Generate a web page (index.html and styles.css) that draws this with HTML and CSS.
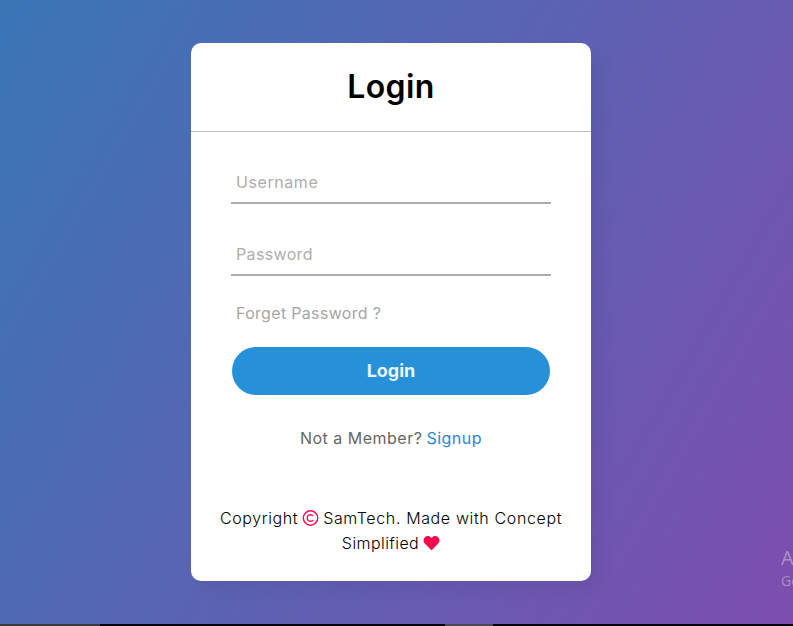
FILE: index.html
```html
<!DOCTYPE html>
<html lang="en">
<head>
<meta charset="utf-8">
<title>Login</title>
<link rel="stylesheet" href="styles.css">
</head>
<body>
<main class="page">
  <section class="card">
    <h1 class="title"><span>Login</span></h1>
    <form class="form">
      <div class="field"><label class="username">Username</label></div>
      <div class="field"><label class="password">Password</label></div>
      <div class="forget"><span>Forget Password ?</span></div>
      <button class="submit" type="button"><span>Login</span></button>
      <div class="signup"><span class="member">Not a Member?</span> <a>Signup</a></div>
    </form>
    <footer class="credits">
      <div class="line">
        <span class="copy">Copyright</span>
        <svg class="icon" viewBox="0 0 16 16" fill="none" stroke="currentColor"><circle cx="8" cy="8" r="7.2" stroke-width="1.4"/><path d="M10.600 5.900A3.300 3.300 0 1 0 10.600 10.100" stroke-width="1.400"/></svg>
        <span class="made">SamTech. Made with Concept</span>
      </div>
      <div class="line">
        <span class="simple">Simplified</span>
        <svg class="icon" viewBox="0 0 16 16" fill="currentColor"><path d="M14.4 2.1C12.7.6 10.2.9 8.600 2.500L8 3.100l-.6-.6C5.800.9 3.300.6 1.600 2.100-.4 3.800-.5 6.800 1.300 8.600l6 6.100q.7.700 1.400 0l6-6.100C16.500 6.800 16.400 3.800 14.400 2.100z"/></svg>
      </div>
    </footer>
  </section>
  <aside class="watermark"><div class="activate">A</div><div class="settings">Go</div></aside>
</main>
<div class="taskbar"><i class="search"></i><i class="active"></i></div>
</body>
</html>
```
FILE: styles.css
```css
* { box-sizing: border-box; }
body {
  margin: 0;
  height: 626px;
  overflow: hidden;
  font: 400 16px/24px Inter, "Open Sans", sans-serif;
}
.page {
  position: relative;
  height: 624px;
  padding: 43px 0 0 191px;
  overflow: hidden;
  background: linear-gradient(120deg, #2980b9, #8e44ad) -292px 0 / 1366px 624px no-repeat;
}
.card {
  width: 400px;
  height: 538px;
  background: #fff;
  border-radius: 10px;
  box-shadow: 10px 10px 15px rgba(0, 0, 0, .05);
}
.title {
  display: flex;
  justify-content: center;
  height: 89px;
  margin: 0;
  padding-top: 20px;
  border-bottom: 1px solid silver;
  font-size: 32px;
  font-weight: 600;
  line-height: 48px;
  letter-spacing: .4px;
}
.form { padding: 30px 40px 0; }
.field {
  height: 42px;
  margin-bottom: 30px;
  padding: 8px 5px 0;
  border-bottom: 2px solid #adadad;
  color: #adadad;
}
.username { letter-spacing: .58px; }
.password { letter-spacing: .35px; }
.forget {
  margin: -5px 0 22px 5px;
  color: #a6a6a6;
  letter-spacing: .32px;
}
.submit {
  display: block;
  width: 318px;
  height: 48px;
  margin: 0 auto;
  padding: 0;
  border: 0;
  border-radius: 24px;
  background: #2691d9;
  color: #e9f4fb;
  font: 700 18px/48px Inter, "Open Sans", sans-serif;
}
.signup {
  display: flex;
  justify-content: center;
  gap: 4px;
  margin-top: 31px;
  color: #666;
  letter-spacing: .5px;
}
.signup a { color: #2e86d1; }
.credits {
  margin-top: 55px;
  font-weight: 350;
}
.line {
  display: flex;
  justify-content: center;
  align-items: center;
  gap: 4px;
  height: 25px;
  white-space: nowrap;
}
.copy { letter-spacing: .6px; }
.made { letter-spacing: .63px; }
.simple { letter-spacing: .42px; }
.icon { width: 17px; height: 16px; color: #f50a4d; }
.watermark {
  position: absolute;
  left: 781px;
  top: 546px;
  width: 40px;
  color: rgba(190, 175, 205, .7);
  font-family: "Open Sans", sans-serif;
  white-space: nowrap;
}
.activate { font-size: 20px; line-height: 24px; }
.settings { font-size: 14px; line-height: 22px; }
.taskbar { display: flex; height: 2px; background: #05000c; }
.search { width: 100px; background: #383a40; }
.active { width: 48px; margin-left: 345px; background: #4d4954; }
```
